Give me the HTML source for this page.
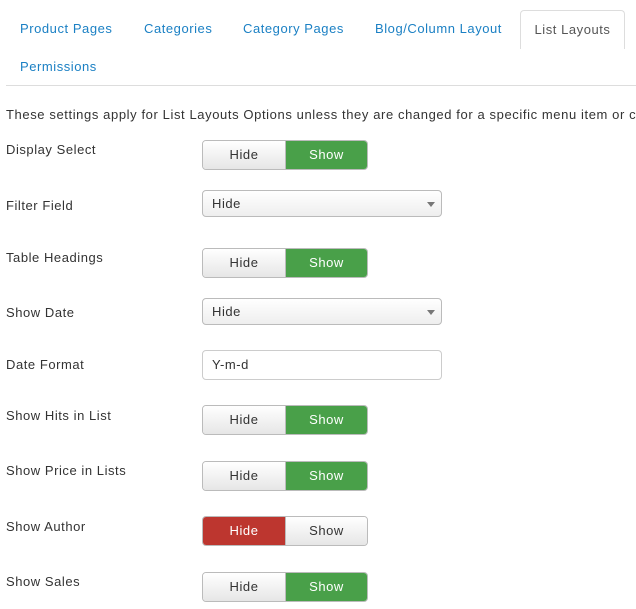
<!DOCTYPE html>
<html><head><style>
body{margin:0;width:636px;height:609px;overflow:hidden;background:#fff;font-family:"Liberation Sans",sans-serif;font-size:13px;color:#333;position:relative;letter-spacing:0.55px}
.a{position:absolute;white-space:nowrap}
.tab{position:absolute;color:#1b80c4;font-size:13px;white-space:nowrap}
.act{position:absolute;left:520px;top:10px;width:103px;height:38px;border:1px solid #ddd;border-bottom:none;border-radius:4px 4px 0 0;background:#fff;color:#555;text-align:center;line-height:37px;white-space:nowrap}
.lbl{position:absolute;left:6px;white-space:nowrap}
.tg{position:absolute;left:202px;width:164px;height:28px;border:1px solid #bbb;border-radius:4px;overflow:hidden;display:flex}
.tg span{flex:0 0 82px;text-align:center;line-height:28px;background:linear-gradient(#fff,#e6e6e6);color:#333}
.tg span+span{flex:1;border-left:1px solid #bbb}
.tg .g{background:#49a049;color:#fff}
.tg .r{background:#bd362f;color:#fff}
.sel{position:absolute;left:202px;border:1px solid #bbb;border-radius:4px;background:linear-gradient(#fff,#eee);line-height:25px;padding-left:9px;box-sizing:border-box;width:240px;height:27px}
.sel:after{content:"";position:absolute;right:6px;top:11px;border:4px solid transparent;border-top:5px solid #777;border-bottom:0}
</style></head><body>
<div class="tab" style="left:20px;top:21px">Product Pages</div>
<div class="tab" style="left:144px;top:21px">Categories</div>
<div class="tab" style="left:243px;top:21px">Category Pages</div>
<div class="tab" style="left:375px;top:21px">Blog/Column Layout</div>
<div class="act">List Layouts</div>
<div class="tab" style="left:20px;top:59px">Permissions</div>
<div class="a" style="left:6px;top:85px;width:630px;border-top:1px solid #ddd"></div>
<div class="a" style="left:6px;top:107px;letter-spacing:0.6px">These settings apply for List Layouts Options unless they are changed for a specific menu item or ca</div>

<div class="lbl" style="top:142px">Display Select</div>
<div class="tg" style="top:140px"><span>Hide</span><span class="g">Show</span></div>
<div class="lbl" style="top:198px">Filter Field</div>
<div class="sel" style="top:190px">Hide</div>
<div class="lbl" style="top:250px">Table Headings</div>
<div class="tg" style="top:248px"><span>Hide</span><span class="g">Show</span></div>
<div class="lbl" style="top:305px">Show Date</div>
<div class="sel" style="top:298px">Hide</div>
<div class="lbl" style="top:357px">Date Format</div>
<div class="a" style="left:202px;top:350px;border:1px solid #ccc;border-radius:4px;line-height:28px;padding-left:9px;box-sizing:border-box;width:240px;height:30px">Y-m-d</div>
<div class="lbl" style="top:408px">Show Hits in List</div>
<div class="tg" style="top:405px"><span>Hide</span><span class="g">Show</span></div>
<div class="lbl" style="top:463px">Show Price in Lists</div>
<div class="tg" style="top:461px"><span>Hide</span><span class="g">Show</span></div>
<div class="lbl" style="top:519px">Show Author</div>
<div class="tg" style="top:516px"><span class="r">Hide</span><span>Show</span></div>
<div class="lbl" style="top:574px">Show Sales</div>
<div class="tg" style="top:572px"><span>Hide</span><span class="g">Show</span></div>
</body></html>
